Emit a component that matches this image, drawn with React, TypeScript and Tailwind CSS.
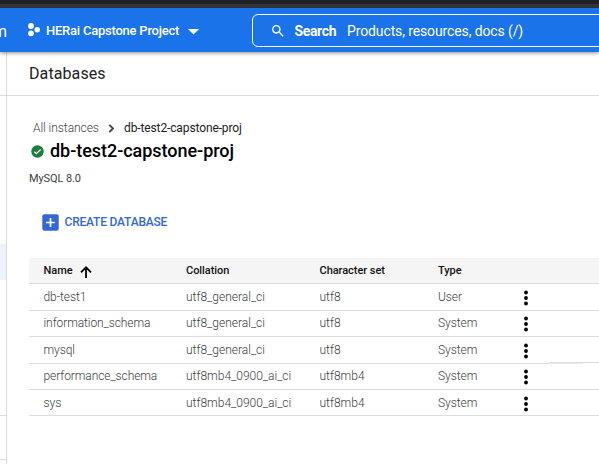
type Database = {
  name: string;
  collation: string;
  charset: string;
  type: string;
  height: string;
};

const databases: Database[] = [
  { name: 'db-test1', collation: 'utf8_general_ci', charset: 'utf8', type: 'User', height: 'h-[27px]' },
  { name: 'information_schema', collation: 'utf8_general_ci', charset: 'utf8', type: 'System', height: 'h-[26px] pb-[2px]' },
  { name: 'mysql', collation: 'utf8_general_ci', charset: 'utf8', type: 'System', height: 'h-[27px]' },
  { name: 'performance_schema', collation: 'utf8mb4_0900_ai_ci', charset: 'utf8mb4', type: 'System', height: 'h-[26px] pb-[2px]' },
  { name: 'sys', collation: 'utf8mb4_0900_ai_ci', charset: 'utf8mb4', type: 'System', height: 'h-[26px]' },
];

const columns = 'grid grid-cols-[142.5px_133.5px_118.5px_79.5px_1fr] items-center pl-[14.5px]';

function TopBar() {
  return (
    <header className="relative z-10 flex h-[44px] items-center bg-[#1a73e8] text-white shadow-[0_1px_4px_rgba(0,0,0,0.45)]">
      <span className="-ml-[7px] mt-[3px] w-[14px] shrink-0 text-[16px]">m</span>
      <svg className="ml-[20px] mt-[-1px] h-[14px] w-[14px] shrink-0" viewBox="0 0 14 14" fill="currentColor">
        <circle cx="4" cy="3" r="2.9" />
        <circle cx="10.2" cy="6.8" r="2.7" />
        <circle cx="4" cy="10.3" r="2.9" />
      </svg>
      <span className="ml-[5px] mt-px w-[134px] shrink-0 whitespace-nowrap text-[13px] font-medium tracking-[-0.23px]">HERai Capstone Project</span>
      <svg className="ml-[8px] mt-[3px] h-[6px] w-[11px] shrink-0" viewBox="0 0 11 6" fill="currentColor">
        <path d="M0 0h11L5.5 5.5z" />
      </svg>
      <div className="-mr-[8px] ml-[53px] mt-px flex h-[33px] flex-1 items-center rounded-[6px] border border-white">
        <svg className="ml-[17px] h-[16px] w-[16px] shrink-0" viewBox="0 0 24 24" fill="currentColor">
          <path d="M15.5 14h-.79l-.28-.27A6.47 6.47 0 0 0 16 9.5 6.5 6.5 0 1 0 9.5 16c1.61 0 3.09-.59 4.23-1.57l.27.28v.79l5 4.99L20.49 19zm-6 0C7.01 14 5 11.99 5 9.5S7.01 5 9.5 5 14 7.01 14 9.5 11.99 14 9.5 14z" />
        </svg>
        <span className="ml-[8.5px] mt-px w-[52.5px] shrink-0 text-[14px] font-bold tracking-[-0.35px]">Search</span>
        <span className="mt-px whitespace-nowrap text-[14px] tracking-[-0.12px]">Products, resources, docs (/)</span>
      </div>
    </header>
  );
}

function MoreIcon() {
  return (
    <svg className="mt-[2px] h-[16px] w-[16px]" viewBox="0 0 16 16" fill="#000">
      <circle cx="8" cy="2.5" r="1.9" />
      <circle cx="8" cy="8" r="1.9" />
      <circle cx="8" cy="13.5" r="1.9" />
    </svg>
  );
}

function DatabaseTable() {
  return (
    <section className="relative ml-[22px] mt-[27px]">
      <div className={`${columns} h-[26px] border-b border-[#dadce0] bg-[#f5f5f5] pt-px text-[11px] font-medium tracking-[-0.05px] text-[#111]`}>
        <span className="flex items-center">
          <span className="w-[36.5px]">Name</span>
          <svg className="mt-px h-[12px] w-[12px]" viewBox="0 0 12 12" fill="none" stroke="#000" strokeWidth="1.8">
            <path d="M6 12V1.5M1 6.3l5-5 5 5" />
          </svg>
        </span>
        <span>Collation</span>
        <span>Character set</span>
        <span>Type</span>
      </div>
      {databases.map((db) => (
        <div key={db.name} className={`${columns} ${db.height} border-b border-[#dadce0] text-[12px] font-light text-[#3c4043]`}>
          <span className="tracking-[-0.08px]">{db.name}</span>
          <span>{db.collation}</span>
          <span>{db.charset}</span>
          <span className="tracking-[-0.05px]">{db.type}</span>
          <MoreIcon />
        </div>
      ))}
      <div className="absolute right-0 top-[104px] h-[2px] w-[49px] bg-white">
        <div className="h-px bg-[#dadce0]" />
        <div className="h-px w-[33px] bg-[#e8e9eb]" />
      </div>
    </section>
  );
}

export default function App() {
  return (
    <div className="flex h-[464px] w-[599px] flex-col overflow-hidden bg-white font-['Roboto',sans-serif] text-[#202124]">
      <div className="h-[4px] shrink-0 bg-[#202124]" />
      <div className="h-[4px] shrink-0 bg-[#35363a]" />
      <TopBar />
      <div className="flex flex-1">
        <aside className="flex w-[7px] shrink-0 flex-col border-r border-[#dadce0]">
          <div className="mt-[43px] h-px bg-[#dadce0]" />
          <div className="mt-[148px] h-[36px] bg-[#edf3fe]" />
          <div className="mt-[135px] h-px bg-[#dadce0]" />
          <div className="mt-[43px] h-px bg-[#dadce0]" />
        </aside>
        <main className="min-w-0 flex-1">
          <h1 className="flex h-[44px] items-center border-b border-[#dadce0] pl-[22px] text-[16px] tracking-[0.1px]">Databases</h1>
          <nav className="mt-[24px] flex h-[16px] items-center pl-[26px] text-[12px]">
            <span className="w-[75px] font-light tracking-[-0.05px] text-[#3c4043]">All instances</span>
            <svg className="mt-px h-[9px] w-[7px]" viewBox="0 0 7 9" fill="none" stroke="#444" strokeWidth="1.9">
              <path d="M1.3.8 5 4.5 1.3 8.2" />
            </svg>
            <span className="ml-[9px] tracking-[-0.12px]">db-test2-capstone-proj</span>
          </nav>
          <div className="mt-px flex h-[26px] items-center pl-[23.5px]">
            <svg className="mt-[2px] h-[13px] w-[13px]" viewBox="0 0 13 13">
              <circle cx="6.5" cy="6.5" r="6.2" fill="#188038" />
              <path d="m3.4 6.7 2 2 4.2-4.2" fill="none" stroke="#fff" strokeWidth="1.3" />
            </svg>
            <h2 className="ml-[6.5px] text-[18px] font-medium tracking-[-0.04px] text-black">db-test2-capstone-proj</h2>
          </div>
          <p className="mt-[8px] h-[16px] pl-[22px] text-[11px] leading-[16px] tracking-[-0.1px] text-[#3c4043]">MySQL 8.0</p>
          <button className="ml-[35px] mt-[26px] flex h-[18px] items-center text-[12px] font-medium text-[#3367d6]">
            <svg className="h-[17px] w-[17px]" viewBox="0 0 17 17">
              <rect x=".3" y=".3" width="16.4" height="16.4" rx="2" fill="#3367d6" />
              <path d="M8.5 4v9M4 8.5h9" stroke="#fff" strokeWidth="1.7" />
            </svg>
            <span className="ml-[5.5px] tracking-[-0.2px]">CREATE DATABASE</span>
          </button>
          <DatabaseTable />
        </main>
      </div>
    </div>
  );
}
